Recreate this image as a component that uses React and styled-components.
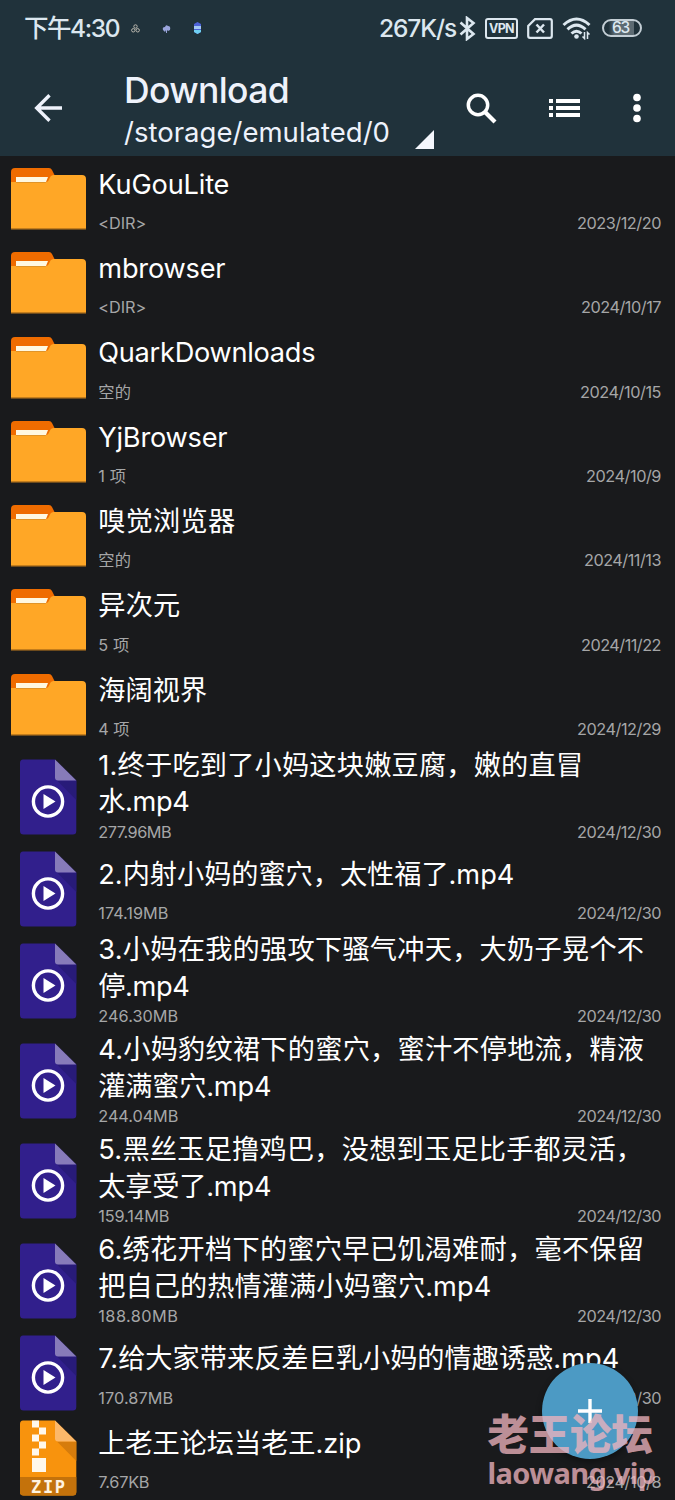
import React, { useLayoutEffect, useRef, useState } from 'react'
import styled, { createGlobalStyle } from 'styled-components'

const GlobalStyle = createGlobalStyle`
  * {
    box-sizing: border-box;
  }
  body {
    margin: 0;
    background: #191a1c;
    font-family: Inter, 'Noto Sans CJK SC', sans-serif;
    color: #fff;
  }
`

const Screen = styled.main`
  position: relative;
  width: 675px;
  height: 1500px;
  overflow: hidden;
  background: #191a1c;
`

const Header = styled.header`
  height: 156px;
  background: #20323b;
  color: #eef2fb;
`

const StatusBar = styled.div`
  display: flex;
  align-items: center;
  height: 56px;
  padding: 0 33px 0 24px;
  color: #dce7ef;

  svg {
    display: block;
    flex: none;
  }
`

const Clock = styled.span`
  width: 95px;
  font-size: 24.5px;
  line-height: 30px;
  font-weight: 500;
  white-space: nowrap;
`

const Notices = styled.div`
  display: flex;
  align-items: center;
  flex: 1;
  margin-left: 12px;
  gap: 22px;
`

const Speed = styled.span`
  font-size: 24.5px;
  line-height: 30px;
  font-weight: 500;
  margin-right: 3px;
`

const StatusIcons = styled.div`
  display: flex;
  align-items: center;
  gap: 9px;
`

const VpnBadge = styled.span`
  display: flex;
  align-items: center;
  justify-content: center;
  width: 33px;
  height: 21px;
  border: 2px solid #dce7ef;
  border-radius: 3px;
  font-size: 12.5px;
  font-weight: 700;
`

const Battery = styled.span`
  display: flex;
  align-items: center;
  width: 40px;
  height: 18px;
  margin-left: 1px;
  padding-left: 8px;
  border: 2px solid #c3ced5;
  border-radius: 9px;
  background: linear-gradient(90deg, #20323b 0 12%, #5d6b73 30% 82%, #20323b 82%);
  font-size: 15.5px;
  line-height: 16px;
  font-weight: 500;
`

const Toolbar = styled.div`
  display: flex;
  height: 100px;
  padding-left: 34px;

  svg {
    display: block;
    flex: none;
  }
`

const BackButton = styled.div`
  width: 90px;
  padding-top: 37px;
`

const Location = styled.div`
  width: 291px;
  padding-top: 14px;
`

const Folder = styled.div`
  height: 41px;
  font-size: 35.5px;
  line-height: 41px;
  font-weight: 500;
`

const Path = styled.div`
  height: 42px;
  font-size: 27.5px;
  line-height: 42px;
`

const DropMark = styled.div`
  width: 19px;
  height: 19px;
  margin-top: 74px;
  margin-right: 1px;
  background: #f4f7fd;
  clip-path: polygon(100% 0, 100% 100%, 0 100%);
`

const Actions = styled.div`
  display: flex;
  align-items: center;
  height: 104px;
  margin-left: 31px;
`

const FileList = styled.section`
  padding-top: 0.7px;
`

const Row = styled.div`
  display: grid;
  grid-template-columns: 98.3px 1fr;
  height: ${(props) => (props.$tall ? '100px' : '84.33px')};
`

const IconCell = styled.div`
  display: flex;
  align-items: center;
  padding-left: ${(props) => (props.$folder ? '10px' : '19px')};

  svg {
    display: block;
  }
`

const Info = styled.div`
  display: flex;
  flex-direction: column;
  justify-content: space-between;
  padding: ${(props) => (props.$tall ? '1px 14px 4px 0' : '10px 14px 7px 0')};
`

const Title = styled.div`
  font-size: 27.2px;
  line-height: 36.5px;
`

const Line = styled.div`
  height: 36.5px;
`

const Meta = styled.div`
  display: flex;
  justify-content: space-between;
  height: 22px;
  font-size: 16.3px;
  line-height: 22px;
  color: #a5a6a7;
`

const Fab = styled.div`
  position: absolute;
  left: 542px;
  top: 1363px;
  display: flex;
  align-items: center;
  justify-content: center;
  width: 96px;
  height: 96px;
  border-radius: 50%;
  background: #4c9ac4;
  box-shadow: 0 3px 6px rgba(0, 0, 0, 0.4);
`

const Watermark = styled.div`
  position: absolute;
  left: 487.500px;
  top: 1408px;
  color: #f0b4be;
  opacity: 0.76;
  font-weight: 700;
`

const WatermarkName = styled.div`
  height: 48px;
  font: 900 41.5px/48px 'Noto Sans CJK SC', sans-serif;
`

const WatermarkSite = styled.div`
  height: 34px;
  font: 700 29px/34px 'Noto Sans', sans-serif;
`

const FitText = styled.span`
  display: inline-block;
  white-space: nowrap;
`

// Spreads the letters so that the text takes the given width
const Fit = ({ width, children }) => {
  const ref = useRef(null)
  const [spacing, setSpacing] = useState(0)

  useLayoutEffect(() => {
    const natural = ref.current.getBoundingClientRect().width
    setSpacing((width - natural) / children.length)
  }, [width, children])

  return (
    <FitText ref={ref} style={{ letterSpacing: `${spacing}px` }}>
      {children}
    </FitText>
  )
}

const FolderIcon = () => (
  <svg width="77" height="62" viewBox="0 0 77 62">
    <path d="M1 20V4q0-4 4-4h34q2 0 3 2l3 6v12H1z" fill="#ef6c00" />
    <path d="M1 61V14h34.500q2 0 3-1.500l2-4Q41.500 7 43.500 7H72q4 0 4 4v50z" fill="#ffa726" />
    <path d="M6 9h32l-2 5H6z" fill="#fff8e1" />
    <path d="M6 14h30l-.5 1H6z" fill="#e09428" />
    <path d="M1 60h75v1.500H1z" fill="#c37d1c" />
  </svg>
)

const VideoIcon = () => (
  <svg width="58" height="76" viewBox="0 0 58 76">
    <path d="M4 .5h32l21.300 21V72q0 3.500-3.500 3.500H4.500Q1 75.500 1 72V4q0-3.500 3-3.500z" fill="#311f8c" />
    <path d="M38 21.500h19.300V41z" fill="#281b79" />
    <path d="M36 .5l21.300 21H39q-3 0-3-3z" fill="#877bb9" />
    <circle cx="29" cy="42.500" r="14.600" fill="none" stroke="#fff" strokeWidth="3.400" />
    <path d="M24.500 35v15l12-7.500z" fill="#fff" />
  </svg>
)

const ZipLabel = styled.text`
  font: 700 17px 'DejaVu Sans Mono', monospace;
  fill: #fff3e0;
`

const ZipIcon = () => (
  <svg width="58" height="76" viewBox="0 0 58 76">
    <path d="M4 .5h32l21.300 21V72q0 3.500-3.500 3.500H4.500Q1 75.500 1 72V4q0-3.500 3-3.500z" fill="#f8930d" />
    <path d="M38 21.500h19.300V41z" fill="#d67c0c" />
    <path d="M36 .5l21.300 21H39q-3 0-3-3z" fill="#fcb86a" />
    <path d="M1 57h56.300v15q0 3.500-3.500 3.500H4.500Q1 75.500 1 72z" fill="#c4720b" />
    <path
      d="M13 .5h7v7h-7zM20 7.500h7v7h-7zM13 14.500h7v7h-7zM20 21.500h7v7h-7zM13 28.500h7v7h-7zM13 38h14v14H13z"
      fill="#fff8ec"
    />
    <ZipLabel x="12" y="73" textLength="34">
      ZIP
    </ZipLabel>
  </svg>
)

const icons = { folder: FolderIcon, video: VideoIcon, zip: ZipIcon }

// Each piece of text is followed by the width that it takes
const files = [
  { type: 'folder', lines: [['KuGouLite', 131]], note: ['<DIR>', 48], date: ['2023/12/20', 84] },
  { type: 'folder', lines: [['mbrowser', 127]], note: ['<DIR>', 48], date: ['2024/10/17', 80] },
  { type: 'folder', lines: [['QuarkDownloads', 217]], note: ['空的', 33], date: ['2024/10/15', 81] },
  { type: 'folder', lines: [['YjBrowser', 129]], note: ['1 项', 28], date: ['2024/10/9', 75] },
  { type: 'folder', lines: [['嗅觉浏览器', 137]], note: ['空的', 33], date: ['2024/11/13', 77] },
  { type: 'folder', lines: [['异次元', 82]], note: ['5 项', 31], date: ['2024/11/22', 80] },
  { type: 'folder', lines: [['海阔视界', 109]], note: ['4 项', 31], date: ['2024/12/29', 84] },
  {
    type: 'video',
    lines: [['1.终于吃到了小妈这块嫩豆腐，嫩的直冒', 485], ['水.mp4', 91]],
    note: ['277.96MB', 73],
    date: ['2024/12/30', 84],
  },
  {
    type: 'video',
    lines: [['2.内射小妈的蜜穴，太性福了.mp4', 416]],
    note: ['174.19MB', 70],
    date: ['2024/12/30', 84],
  },
  {
    type: 'video',
    lines: [['3.小妈在我的强攻下骚气冲天，大奶子晃个不', 546], ['停.mp4', 91]],
    note: ['246.30MB', 80],
    date: ['2024/12/30', 84],
  },
  {
    type: 'video',
    lines: [['4.小妈豹纹裙下的蜜穴，蜜汁不停地流，精液', 546], ['灌满蜜穴.mp4', 173]],
    note: ['244.04MB', 80],
    date: ['2024/12/30', 84],
  },
  {
    type: 'video',
    lines: [['5.黑丝玉足撸鸡巴，没想到玉足比手都灵活，', 545], ['太享受了.mp4', 173]],
    note: ['159.14MB', 71],
    date: ['2024/12/30', 84],
  },
  {
    type: 'video',
    lines: [['6.绣花开档下的蜜穴早已饥渴难耐，毫不保留', 546], ['把自己的热情灌满小妈蜜穴.mp4', 393]],
    note: ['188.80MB', 80],
    date: ['2024/12/30', 84],
  },
  {
    type: 'video',
    lines: [['7.给大家带来反差巨乳小妈的情趣诱惑.mp4', 521]],
    note: ['170.87MB', 75],
    date: ['2024/12/30', 84],
  },
  { type: 'zip', lines: [['上老王论坛当老王.zip', 263]], note: ['7.67KB', 51], date: ['2024/10/8', 75] },
]

const FileRow = ({ file }) => {
  const Icon = icons[file.type]
  const tall = file.lines.length > 1

  return (
    <Row $tall={tall}>
      <IconCell $folder={file.type === 'folder'}>
        <Icon />
      </IconCell>
      <Info $tall={tall}>
        <Title>
          {file.lines.map(([text, width]) => (
            <Line key={text}>
              <Fit width={width}>{text}</Fit>
            </Line>
          ))}
        </Title>
        <Meta>
          <Fit width={file.note[1]}>{file.note[0]}</Fit>
          <Fit width={file.date[1]}>{file.date[0]}</Fit>
        </Meta>
      </Info>
    </Row>
  )
}

const App = () => {
  return (
    <Screen>
      <GlobalStyle />
      <Header>
        <StatusBar>
          <Clock>
            <Fit width={95}>下午4:30</Fit>
          </Clock>
          <Notices>
            <svg width="9" height="9" viewBox="0 0 9 9" fill="none" stroke="#b9b7ae">
              <circle cx="4.500" cy="2.500" r="1.700" />
              <circle cx="2.300" cy="6.300" r="1.700" />
              <circle cx="6.700" cy="6.300" r="1.700" />
            </svg>
            <svg width="9" height="9" viewBox="0 0 9 9">
              <path d="M1 6q-1-3 2-3 1-3 3-1 3 0 2 4l-2 1-1-1v3H4V6L3 8z" fill="#9aa5dc" />
            </svg>
            <svg width="9" height="12" viewBox="0 0 9 12">
              <path d="M4.500 0L8 2v8l-3.500 2L1 10V2z" fill="#4d62d8" />
              <path d="M1 4h7v3H1z" fill="#a2c8f5" />
              <path d="M1 8h7v2l-3.500 2L1 10z" fill="#6fd0f2" />
            </svg>
          </Notices>
          <Speed>
            <Fit width={77}>267K/s</Fit>
          </Speed>
          <StatusIcons>
            <svg width="17" height="25" viewBox="0 0 17 25" fill="none" stroke="#dce7ef" strokeWidth="2.600">
              <path d="M1.500 6.500l13 11.500-6.500 5V2l6.500 5-13 11.500" />
            </svg>
            <VpnBadge>
              <Fit width={25}>VPN</Fit>
            </VpnBadge>
            <svg width="26" height="21" viewBox="0 0 26 21" fill="none" stroke="#dce7ef" strokeWidth="2.200">
              <path d="M8 1.200h15q1.800 0 1.800 1.800v15q0 1.800-1.800 1.800H3q-1.800 0-1.800-1.800V8z" />
              <path d="M9.500 6.500l7.500 8M17 6.500l-7.500 8" strokeWidth="2.500" />
            </svg>
            <svg width="30" height="23" viewBox="0 0 30 23" fill="none" stroke="#dce7ef" strokeWidth="3">
              <path d="M1.500 8q13-12 26 0M5.500 12.300q9-8.500 18 0M9.500 16.500q5-4.500 10 0" />
              <circle cx="14.500" cy="19.500" r="2.300" fill="#dce7ef" stroke="none" />
              <path d="M22.500 15v6.500l-2-2M25.500 22v-6.500l2 2" strokeWidth="1.500" />
            </svg>
            <Battery>
              <Fit width={17}>63</Fit>
            </Battery>
          </StatusIcons>
        </StatusBar>
        <Toolbar>
          <BackButton>
            <svg width="29" height="30" viewBox="0 0 29 30" fill="none" stroke="#eef2fb" strokeWidth="3.400">
              <path d="M28 15H3M15.500 2.200L2.700 15l12.800 12.800" />
            </svg>
          </BackButton>
          <Location>
            <Folder>
              <Fit width={165}>Download</Fit>
            </Folder>
            <Path>
              <Fit width={266}>/storage/emulated/0</Fit>
            </Path>
          </Location>
          <DropMark />
          <Actions>
            <svg width="31" height="31" viewBox="0 0 31 31" fill="none" stroke="#fff" strokeWidth="3.500">
              <circle cx="12" cy="12" r="9.700" />
              <path d="M18.500 18.500l10.500 10.500" strokeWidth="4.200" />
            </svg>
            <svg width="84" height="20" viewBox="0 0 84 20" fill="#fff">
              <path d="M52 1h4v4h-4zM59 1h24v4H59zM52 8h4v4h-4zM59 8h24v4H59zM52 15h4v4h-4zM59 15h24v4H59z" />
            </svg>
            <svg width="62" height="30" viewBox="0 0 62 30" fill="#fff">
              <circle cx="56" cy="4.500" r="3.800" />
              <circle cx="56" cy="15" r="3.800" />
              <circle cx="56" cy="25.500" r="3.800" />
            </svg>
          </Actions>
        </Toolbar>
      </Header>
      <FileList>
        {files.map((file) => (
          <FileRow key={file.lines[0][0]} file={file} />
        ))}
      </FileList>
      <Fab>
        <svg width="24" height="24" viewBox="0 0 24 24" fill="none" stroke="#fff" strokeWidth="3.400">
          <path d="M12 0v24M0 12h24" />
        </svg>
      </Fab>
      <Watermark>
        <WatermarkName>
          <Fit width={165}>老王论坛</Fit>
        </WatermarkName>
        <WatermarkSite>
          <Fit width={168}>laowang.vip</Fit>
        </WatermarkSite>
      </Watermark>
    </Screen>
  )
}

export default App
